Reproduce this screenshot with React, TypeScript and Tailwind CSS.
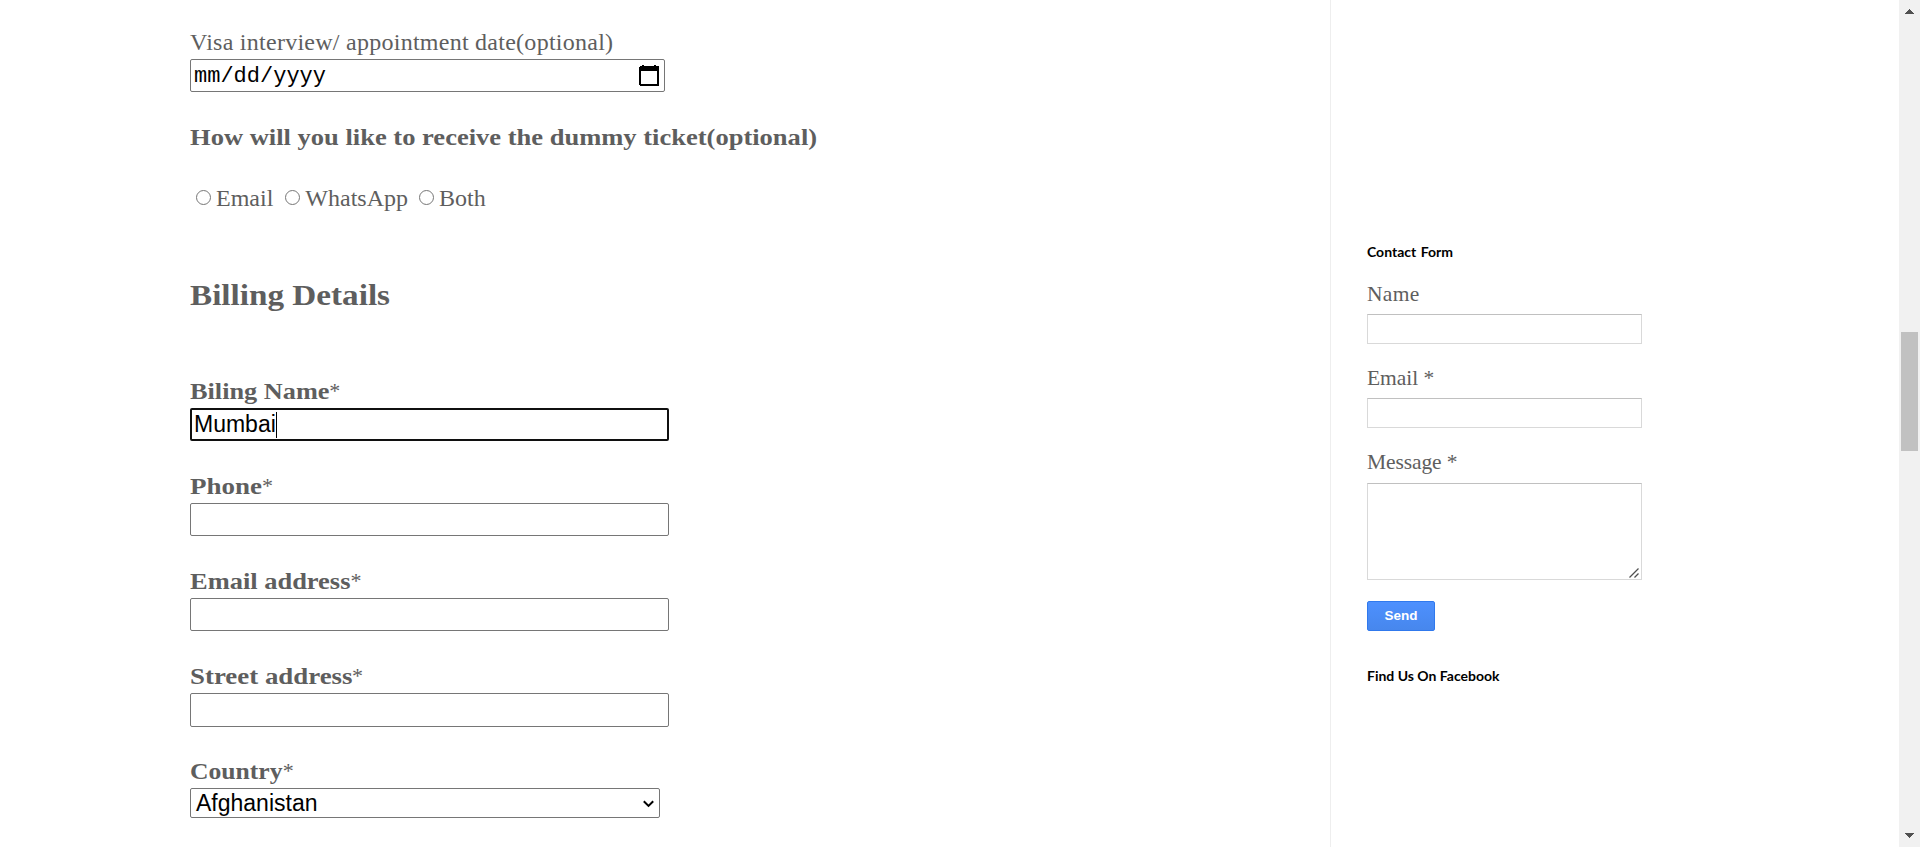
const sans = "font-['Liberation_Sans',Arial,sans-serif]";

const billing = [
  { label: "Biling Name", value: "Mumbai", focused: true, stretch: "mr-[12px] scale-x-[1.095]", box: "h-[33px]", gap: "mb-[30px]" },
  { label: "Phone", value: "", focused: false, stretch: "mr-[8px] scale-x-[1.125]", box: "h-[33px]", gap: "mb-[30px]" },
  { label: "Email address", value: "", focused: false, stretch: "mr-[15px] scale-x-[1.102]", box: "h-[33px]", gap: "mb-[30px]" },
  { label: "Street address", value: "", focused: false, stretch: "mr-[17px] scale-x-[1.12]", box: "h-[34px]", gap: "mb-[29px]" },
];

const delivery = [
  { name: "Email", gap: "mr-[12px]" },
  { name: "WhatsApp", gap: "mr-[11px]" },
  { name: "Both", gap: "" },
];

function Label({ text, stretch }: { text: string; stretch: string }) {
  return (
    <div className="flex h-8">
      <b className={"origin-left " + stretch}>{text}</b>
      <span className="text-[22px]">*</span>
    </div>
  );
}

function CalendarIcon() {
  return (
    <svg width="20" height="21" viewBox="0 0 20 21" shapeRendering="crispEdges">
      <path fill="#000" fillRule="evenodd" d="M3 0h2v1h10V0h2v1h2l1 1v18l-1 1H1l-1-1V2l1-1h2zM2 6v13h16V6z" />
    </svg>
  );
}

function SidebarField({ label, track }: { label: string; track: string }) {
  return (
    <div className="mb-[21px]">
      <div className={"h-[33px] " + track}>{label}</div>
      <div className="h-[30px] w-[275px] border border-[#d9d9d9] border-t-[#c0c0c0] bg-white" />
    </div>
  );
}

function Scrollbar() {
  return (
    <div className="flex w-[21px] flex-col items-center bg-[#f1f1f1] pr-px">
      <svg className="mt-[9px] shrink-0" width="9" height="5" viewBox="0 0 9 5" shapeRendering="crispEdges">
        <path fill="#505050" d="M4 0h1v1h1v1h1v1h1v1h1v1H0V4h1V3h1V2h1V1h1z" />
      </svg>
      <div className="ml-px mt-[318px] h-[119px] w-[17px] shrink-0 bg-[#c1c1c1]" />
      <svg className="mt-[382px] shrink-0" width="9" height="5" viewBox="0 0 9 5" shapeRendering="crispEdges">
        <path fill="#505050" d="M0 0h9v1H8v1H7v1H6v1H5v1H4V4H3V3H2V2H1V1H0z" />
      </svg>
    </div>
  );
}

export default function App() {
  return (
    <div className="flex h-[847px] w-[1920px] overflow-hidden bg-white font-['Liberation_Serif',serif] text-[#5e5e5e]">
      <main className="w-[1330px] shrink-0 pl-[190px] pt-[27px] text-[24px] leading-[30px]">
        <div className="h-8 tracking-[0.26px]">Visa interview/ appointment date(optional)</div>
        <div className="mb-[30px] flex h-[33px] w-[475px] items-center justify-between rounded-[2px] border border-[#767676] pl-[3px] pr-[5px] font-['Liberation_Mono',monospace] text-[22px] text-black">
          <span className="pt-[2px]">mm/dd/yyyy</span>
          <CalendarIcon />
        </div>
        <div className="mb-[31px] w-fit origin-left scale-x-[1.105] font-bold">How will you like to receive the dummy ticket(optional)</div>
        <div className="mb-[64px] flex items-center pl-[6px]">
          {delivery.map((d) => (
            <label key={d.name} className={"flex items-center gap-[5px] " + d.gap}>
              <i className="mb-px size-[15px] rounded-full border border-[#767676]" />
              {d.name}
            </label>
          ))}
        </div>
        <h2 className="mb-[63px] w-fit origin-left scale-x-[1.106] text-[30px] font-bold leading-9">Billing Details</h2>
        {billing.map((f) => (
          <div key={f.label} className={f.gap}>
            <Label text={f.label} stretch={f.stretch} />
            <div
              className={
                "flex w-[479px] items-center rounded-[2px] text-[23px] text-black " + sans + " " + f.box + " " +
                (f.focused ? "border-2 border-[#101010] pb-[2px] pl-[2px]" : "border border-[#767676] pl-1")
              }
            >
              {f.value}
              {f.focused && <i className="mt-[2px] h-[26px] w-px bg-black" />}
            </div>
          </div>
        ))}
        <Label text="Country" stretch="mr-[6px] scale-x-[1.067]" />
        <div className={"flex h-[30px] w-[470px] items-center justify-between rounded-[2px] border border-[#767676] pl-[5px] pr-[5px] text-[23px] text-black " + sans}>
          Afghanistan
          <svg className="mt-px" width="11" height="8" viewBox="0 0 11 8" fill="none" stroke="#000" strokeWidth="2">
            <path d="M0.8 1.2 5.5 5.9 10.2 1.2" />
          </svg>
        </div>
      </main>
      <aside className="w-[569px] shrink-0 border-l border-[#eee] pl-9 pt-[242px] text-[21.5px] leading-[26px]">
        <h3 className="mb-[19px] font-['Lato',sans-serif] text-[14px] font-bold leading-5 text-black [word-spacing:1px]">Contact Form</h3>
        <SidebarField label="Name" track="tracking-[0.3px]" />
        <SidebarField label="Email *" track="tracking-[-0.05px]" />
        <div className="h-[34px] tracking-[-0.1px]">Message *</div>
        <div className="flex h-[97px] w-[275px] items-end justify-end border border-[#d9d9d9] border-t-[#c0c0c0] pb-px pr-[2px]">
          <svg width="10" height="10" viewBox="0 0 10 10" stroke="#505050" strokeWidth="1.3">
            <path d="M0.5 9.5 9.5 0.5M5.5 9.5 9.5 5.5" />
          </svg>
        </div>
        <button className={"mt-[21px] block h-[30px] w-[68px] rounded-[2px] border border-[#3079ed] bg-linear-to-b from-[#4d90fe] to-[#4787ed] text-[13.5px] font-bold leading-[28px] text-white " + sans}>Send</button>
        <h3 className="mt-[35px] font-['Lato',sans-serif] text-[14px] font-bold leading-5 text-black">Find Us On Facebook</h3>
      </aside>
      <Scrollbar />
    </div>
  );
}
